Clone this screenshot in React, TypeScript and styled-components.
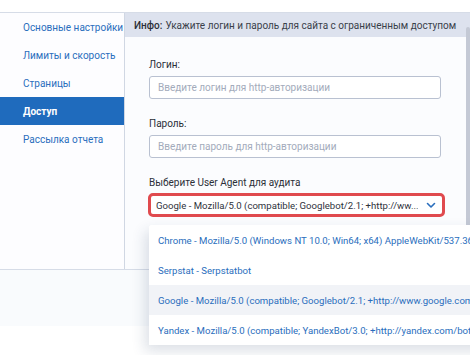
import styled, { createGlobalStyle } from "styled-components";

const GlobalStyle = createGlobalStyle`
  html, body {
    margin: 0;
    padding: 0;
    background: #ffffff;
    overflow: hidden;
  }
  body {
    font-family: Roboto, "Noto Sans", Arial, sans-serif;
    font-size: 10px;
  }
`;

const menu = [
  "Основные настройки",
  "Лимиты и скорость",
  "Страницы",
  "Доступ",
  "Рассылка отчета",
];

const agents = [
  "Chrome - Mozilla/5.0 (Windows NT 10.0; Win64; x64) AppleWebKit/537.36 (KHTML, like Gecko)",
  "Serpstat - Serpstatbot",
  "Google - Mozilla/5.0 (compatible; Googlebot/2.1; +http://www.google.com/bot.html)",
  "Yandex - Mozilla/5.0 (compatible; YandexBot/3.0; +http://yandex.com/bots)",
];

export default function App() {
  return (
    <>
      <GlobalStyle />
      <Page>
        <TopGap />
        <Card>
          <Sidebar>
            {menu.map((item) => (
              <MenuItem key={item} $active={item === "Доступ"}>
                {item}
              </MenuItem>
            ))}
          </Sidebar>
          <Main>
            <InfoBar>
              <b>Инфо:</b> Укажите логин и пароль для сайта с ограниченным доступом
            </InfoBar>
            <Form>
              <Field>
                <Label>Логин:</Label>
                <Input placeholder="Введите логин для http-авторизации" />
              </Field>
              <Field>
                <Label>Пароль:</Label>
                <Input placeholder="Введите пароль для http-авторизации" />
              </Field>
              <Field>
                <Label>Выберите User Agent для аудита</Label>
                <Select>
                  <SelectValue>
                    Google - Mozilla/5.0 (compatible; Googlebot/2.1; +http://ww...
                  </SelectValue>
                  <svg width="10" height="7" viewBox="0 0 10 7">
                    <path
                      d="M1.5 1.5 L5 5 L8.5 1.5"
                      fill="none"
                      stroke="#2a6ebd"
                      strokeWidth="1.6"
                      strokeLinecap="round"
                      strokeLinejoin="round"
                    />
                  </svg>
                </Select>
              </Field>
            </Form>
            <Scrollbar />
            <Dropdown>
              {agents.map((a) => (
                <Option key={a} $hover={a.startsWith("Google")}>
                  {a}
                </Option>
              ))}
            </Dropdown>
          </Main>
        </Card>
        <Footer />
      </Page>
    </>
  );
}

const Page = styled.div`
  width: 470px;
  height: 355px;
  overflow: hidden;
  display: flex;
  flex-direction: column;
`;

const TopGap = styled.div`
  height: 12px;
  background: #ffffff;
`;

const Card = styled.div`
  display: flex;
  height: 256px;
  border-top: 1px solid #d6dce7;
  border-bottom: 1px solid #d6dce7;
`;

const Sidebar = styled.nav`
  width: 124px;
  flex-shrink: 0;
  background: #fdfdff;
  border-right: 1px solid #d0d7e3;
  display: flex;
  flex-direction: column;
`;

const MenuItem = styled.div<{ $active?: boolean }>`
  height: 28px;
  display: flex;
  align-items: center;
  padding-left: 23px;
  font-size: 10px;
  color: ${(p) => (p.$active ? "#ffffff" : "#2a6ebd")};
  background: ${(p) => (p.$active ? "#1f6bbd" : "transparent")};
  font-weight: ${(p) => (p.$active ? 700 : 400)};
  white-space: nowrap;
`;

const Main = styled.section`
  flex: 1;
  position: relative;
  background: #fbfcfe;
`;

const InfoBar = styled.div`
  height: 24px;
  display: flex;
  align-items: center;
  gap: 3px;
  padding-left: 9px;
  background: #dde2ee;
  color: #3a3f4a;
  font-size: 10px;
  white-space: nowrap;

  b {
    font-weight: 500;
    color: #2b2f38;
  }
`;

const Form = styled.div`
  padding: 21px 0 0 24px;
  display: flex;
  flex-direction: column;
  gap: 18px;
`;

const Field = styled.div`
  display: flex;
  flex-direction: column;
`;

const Label = styled.label`
  height: 14px;
  line-height: 14px;
  margin-bottom: 4px;
  font-size: 10px;
  color: #2b2f38;
`;

const Input = styled.input`
  box-sizing: border-box;
  width: 292px;
  height: 23px;
  border: 1px solid #b9c1d1;
  border-radius: 3px;
  background: #ffffff;
  padding: 0 8px;
  font-family: Roboto, Arial, sans-serif;
  font-size: 10px;
  outline: none;

  &::placeholder {
    color: #a3abbb;
  }
`;

const Select = styled.div`
  box-sizing: border-box;
  width: 297px;
  height: 24px;
  margin-left: -1px;
  margin-top: -1px;
  border: 3px solid #e04a4e;
  border-radius: 5px;
  background: #ffffff;
  display: flex;
  align-items: center;
  gap: 8px;
  padding: 0 6px 0 5px;

  svg {
    flex-shrink: 0;
  }
`;

const SelectValue = styled.span`
  flex: 1;
  overflow: hidden;
  font-size: 9.6px;
  color: #2f333c;
  white-space: nowrap;
`;

const Scrollbar = styled.div`
  position: absolute;
  right: 0;
  top: 14px;
  width: 4px;
  height: 200px;
  border-radius: 2px;
  background: #c4c9d5;
`;

const Dropdown = styled.div`
  position: absolute;
  left: 24px;
  top: 212px;
  width: 360px;
  background: #ffffff;
  box-shadow: -4px 6px 14px rgba(40, 60, 100, 0.16);
  border-radius: 3px 0 0 0;
  overflow: hidden;
`;

const Option = styled.div<{ $hover?: boolean }>`
  height: 30px;
  display: flex;
  align-items: center;
  padding-left: 9px;
  font-size: 9.6px;
  color: #2a6ebd;
  white-space: nowrap;
  background: ${(p) => (p.$hover ? "#f1f3f7" : "#ffffff")};
`;

const Footer = styled.div`
  height: 56px;
  background: #f9fbfd;
`;
